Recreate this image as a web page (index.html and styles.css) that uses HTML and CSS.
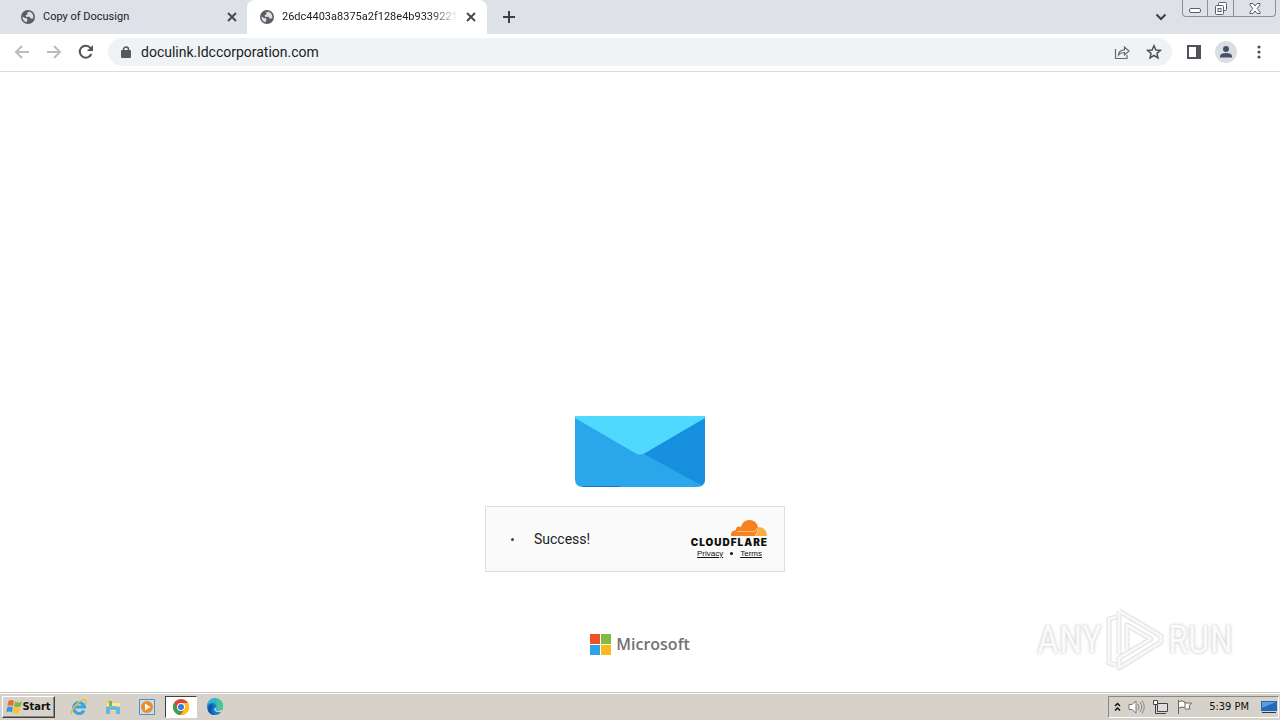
FILE: index.html
```html
<!DOCTYPE html>
<html lang="en">
<head>
<meta charset="utf-8">
<meta name="viewport" content="width=device-width, initial-scale=1">
<title>doculink.ldccorporation.com</title>
<link rel="stylesheet" href="styles.css">
</head>
<body>
<svg class="defs" width="0" height="0" aria-hidden="true">
  <symbol id="globe" viewBox="0 0 14 14"><circle cx="7" cy="7" r="7" fill="#5a5d61"/><path d="M1.500 6.500 4 8 6 8.200 6.500 10 5.500 12.300Q1.500 11 1.500 6.500Z M8.500 1.500 6 2.800 6.500 4.300 4.500 5.500 5.500 7 8.500 6.800 9.500 8.500 12.300 8.500Q13 3.500 8.500 1.500Z" fill="#dcdfe4"/></symbol>
  <symbol id="cross" viewBox="0 0 10 10"><path d="M1 1 9 9M9 1 1 9" stroke="#45484c" stroke-width="1.900" fill="none"/></symbol>
</svg>
<header>
  <div class="tabstrip">
    <div class="tab">
      <svg class="favicon"><use href="#globe"/></svg>
      <span class="tab-title">Copy of Docusign</span>
      <button class="close" aria-label="Close tab"><svg width="10" height="10"><use href="#cross"/></svg></button>
    </div>
    <div class="tab active">
      <svg class="favicon"><use href="#globe"/></svg>
      <span class="tab-title fade">26dc4403a8375a2f128e4b9339221c</span>
      <button class="close" aria-label="Close tab"><svg width="10" height="10"><use href="#cross"/></svg></button>
    </div>
    <button class="new-tab" aria-label="New tab"><svg width="12" height="12" viewBox="0 0 12 12"><path d="M6 0V12M0 6H12" stroke="#3c4043" stroke-width="2"/></svg></button>
    <button class="tab-search" aria-label="Search tabs"><svg width="12" height="8" viewBox="0 0 12 8"><path d="M1.500 1.500 6 6 10.500 1.500" fill="none" stroke="#3c4043" stroke-width="2"/></svg></button>
    <div class="window-buttons">
      <button aria-label="Minimize"><svg width="14" height="12" viewBox="0 0 14 12"><rect x="1.500" y="6.500" width="11" height="4" rx="1.500" fill="#fff" stroke="#5b5e66"/></svg></button>
      <button aria-label="Restore"><svg width="14" height="13" viewBox="0 0 14 13"><g fill="#fff" stroke="#5b5e66"><rect x="4.500" y=".5" width="8" height="8" rx="1"/><rect x="1.500" y="3.500" width="8" height="9" rx="1"/><rect x="4" y="6.500" width="3" height="3"/></g></svg></button>
      <button aria-label="Close"><svg width="12" height="11" viewBox="0 0 12 11"><path d="M1 .5H4L6 3 8 .5H11V2L8.200 5.500 11 9V10.500H8L6 8 4 10.500H1V9L3.800 5.500 1 2Z" fill="#fff" stroke="#5b5e66"/></svg></button>
    </div>
  </div>
  <div class="toolbar">
    <div class="nav">
      <button aria-label="Back"><svg width="16" height="14" viewBox="0 0 16 14"><path d="M15 7H2M8 1 2 7 8 13" fill="none" stroke="#babcbe" stroke-width="2"/></svg></button>
      <button aria-label="Forward"><svg width="16" height="14" viewBox="0 0 16 14"><path d="M1 7H14M8 1 14 7 8 13" fill="none" stroke="#babcbe" stroke-width="2"/></svg></button>
      <button aria-label="Reload"><svg width="16" height="16" viewBox="0 0 16 16"><path d="M13.300 10A6 6 0 1 1 12.500 4L14 6" fill="none" stroke="#505357" stroke-width="2"/><path d="M15 1V7H9Z" fill="#505357"/></svg></button>
    </div>
    <div class="omnibox">
      <svg width="10" height="13" viewBox="0 0 10 13"><rect y="4" width="10" height="8" rx="1" fill="#55585c"/><path d="M2.500 5V3.500a2.500 2.500 0 0 1 5 0V5" fill="none" stroke="#55585c" stroke-width="1.500"/></svg>
      <input class="url" aria-label="Address" value="doculink.ldccorporation.com">
      <button aria-label="Share"><svg width="16" height="16" viewBox="0 0 16 16"><path d="M1.500 5V14.500H13V11M4.500 11Q5 6 10.500 5.800V3L15 7 10.500 11V8.500Q6.500 8.500 4.500 11Z" fill="none" stroke="#66696d" stroke-width="1.200"/></svg></button>
      <button aria-label="Bookmark"><svg width="16" height="16" viewBox="0 0 16 16"><path d="M8 1.700 9.900 6 14.500 6.400 11 9.400 12 14 8 11.500 4 14 5 9.400 1.500 6.400 6.100 6Z" fill="none" stroke="#505357" stroke-width="1.500"/></svg></button>
    </div>
    <div class="actions">
      <button aria-label="Side panel"><svg width="14" height="14" viewBox="0 0 14 14"><path d="M1 1H13V13H1Z" fill="#fff" stroke="#505357" stroke-width="2"/><path d="M9 1H14V13H9Z" fill="#505357"/></svg></button>
      <button aria-label="Profile"><svg width="22" height="22" viewBox="0 0 22 22"><circle cx="11" cy="11" r="11" fill="#dadde2"/><circle cx="11" cy="8" r="3" fill="#45516c"/><path d="M5 16.500V15Q5.500 12 11 12T17 15V16.500Z" fill="#45516c"/></svg></button>
      <button aria-label="Menu"><svg width="4" height="14" viewBox="0 0 4 14" fill="#505357"><circle cx="2" cy="2" r="1.600"/><circle cx="2" cy="7" r="1.600"/><circle cx="2" cy="12" r="1.600"/></svg></button>
    </div>
  </div>
</header>
<main>
  <svg class="envelope" width="130" height="71" viewBox="0 0 130 71">
    <path d="M0 0H130V63Q130 71 122 71H8Q0 71 0 63Z" fill="#2aa6eb"/>
    <path d="M130 1V63Q130 68 126 69L69 38Z" fill="#168fdf"/>
    <path d="M0 0H130V2L70 37Q65 40 60 37L0 2Z" fill="#50d9ff"/>
    <path d="M8 70.500H45" stroke="#1479bd"/>
  </svg>
  <section class="challenge">
    <span class="dot"></span>
    <span class="success">Success!</span>
    <div class="brand">
      <svg width="38" height="18" viewBox="0 0 38 18"><path d="M1 17Q0 12 6 11Q6 6 11 8Q13 1 19 1Q27 1 28 9L26 17Z" fill="#f6821f"/><path d="M26 17 28.500 8Q36 8 37 17Z" fill="#fbad41"/><path d="M7 12.500H24Q26 12.500 27 9M25 17 26.500 14 29 11" stroke="#fcd5a8" stroke-width=".7" fill="none"/></svg>
      <span class="brand-name">CLOUDFLARE</span>
      <div class="links"><a href="#">Privacy</a><i></i><a href="#">Terms</a></div>
    </div>
  </section>
  <div class="microsoft">
    <svg width="21" height="21" viewBox="0 0 21 21"><path d="M0 0H10V10H0Z" fill="#ef5325"/><path d="M11 0H21V10H11Z" fill="#80bb42"/><path d="M0 11H10V21H0Z" fill="#2ea3e5"/><path d="M11 11H21V21H11Z" fill="#fcb91c"/></svg>
    <span>Microsoft</span>
  </div>
  <div class="watermark">
    <span>ANY</span>
    <svg width="60" height="64" viewBox="0 0 60 64"><g fill="none" stroke-linejoin="round"><path d="M11 9 4 11V55L11 57M14 3V46M14 3 56 28V34L14 60V50L46 31 22 17V42" stroke="#e2e2e2" stroke-width="5"/><path d="M11 9 4 11V55L11 57M14 3V46M14 3 56 28V34L14 60V50L46 31 22 17V42" stroke="#f8f8f8" stroke-width="3"/></g></svg>
    <span>RUN</span>
  </div>
</main>
<footer class="taskbar">
  <button class="start"><svg width="16" height="16" viewBox="0 0 16 16"><path d="M2.500 2Q5 0 8 2L7 7.200Q4 5.500 1.500 7.200Z" fill="#ed6a2c"/><path d="M9 2.500Q12 4.500 16 2.500L14.500 7.500Q11 9 8 7.500Z" fill="#7fba3c"/><path d="M1.300 8.300Q4 6.500 6.800 8.300L6 13.500Q3 11.500 .3 13.500Z" fill="#3c94d5"/><path d="M7.800 8.500Q11 10 14.300 8.500L13 14Q10 15.500 7 14Z" fill="#f7c32e"/></svg>Start</button>
  <nav class="apps">
    <button aria-label="Internet Explorer"><svg width="18" height="18" viewBox="0 0 18 18"><path d="M14 12.500A5.500 5.500 0 1 1 14.500 9H5" fill="none" stroke="#37a5e1" stroke-width="3"/><path d="M2 16C-2 14 12-1 16 2Q17 3 15.500 6" fill="none" stroke="#e8bd35" stroke-width="1.500"/></svg></button>
    <button aria-label="Explorer"><svg width="18" height="18" viewBox="0 0 18 18"><path d="M2 2H7L8 4H15V14H2Z" fill="#e9cd72"/><path d="M3 5H16V13H3Z" fill="#f8e7a4"/><path d="M2 9Q9 7 16 9V16H12V12H6V16H2Z" fill="#65b9dc"/><path d="M5 3H8V8H5Z" fill="#72b866"/></svg></button>
    <button aria-label="Media Player"><svg width="18" height="18" viewBox="0 0 18 18"><path d="M1.500 1.500H16.500V16.500H1.500Z" fill="#c9e0f3" stroke="#4d91c9"/><circle cx="9" cy="9" r="6" fill="#f28b21"/><path d="M7 5.500 12.500 9 7 12.500Z" fill="#fff"/></svg></button>
    <button class="running" aria-label="Chrome"><svg width="16" height="16" viewBox="0 0 16 16"><circle cx="8" cy="8" r="8" fill="#e44336"/><path d="M1.070 4 4.500 10 8 12 7.500 16A8 8 0 0 1 1.070 4Z" fill="#35a352"/><path d="M8 4H14.930A8 8 0 0 1 7.500 16L11.500 10Z" fill="#fbc116"/><circle cx="8" cy="8" r="4" fill="#fff"/><circle cx="8" cy="8" r="3" fill="#3478e5"/></svg></button>
    <button aria-label="Edge"><svg width="18" height="18" viewBox="0 0 18 18"><circle cx="9" cy="9" r="8" fill="#1778c9"/><path d="M1 8A8 8 0 0 1 17 8Q17 12 12 12 9 12 10.500 9 10 5 6 5 3 5 1 8Z" fill="#2bb5cf"/><path d="M10 1Q17 2 17 8T12 12Q9 11 11 9 12 5 10 1Z" fill="#4ac596"/><path d="M10.500 9Q8.500 11 11 12.500 14 13 16.500 11.500L15.500 14Q12 15 9 13 7 10 10.500 9Z" fill="#d6d3ce"/><path d="M7 8Q4 14 9 17 4 17 2 13 1 7 6 6Z" fill="#1259a5"/></svg></button>
  </nav>
  <div class="tray">
    <button aria-label="Show hidden icons"><svg width="7" height="10" viewBox="0 0 7 10"><path d="M1 4 3.500 1.500 6 4M1 8.500 3.500 6 6 8.500" fill="none" stroke="#111" stroke-width="1.500"/></svg></button>
    <button aria-label="Volume"><svg width="17" height="16" viewBox="0 0 17 16"><path d="M1 5.500H4L8 2V14L4 10.500H1Z" fill="#fff" stroke="#777"/><path d="M10 5Q12 8 10 11M12 3Q15.500 8 12 13M14 1.500Q18.500 8 14 14.500" fill="none" stroke="#888"/></svg></button>
    <button aria-label="Network"><svg width="17" height="16" viewBox="0 0 17 16"><path d="M5.500 4.500H15.500V12.500H5.500Z" fill="#ddd" stroke="#444"/><path d="M1.500 1.500H5.500V5.500H1.500Z" fill="#fff" stroke="#444"/><path d="M7 14.500H14M3.500 5V14.500H9" fill="none" stroke="#444"/></svg></button>
    <button aria-label="Action Center"><svg width="17" height="16" viewBox="0 0 17 16"><path d="M2.500 1V15M3 2.500Q6 1 9 3V9Q6 7 3 9M9 4H15.500L13 7 14 10H9" fill="#fff" stroke="#666"/></svg></button>
    <time>5:39 PM</time>
    <button aria-label="Show desktop"><svg width="16" height="14" viewBox="0 0 16 14"><path d="M0 1H16V11H0Z" fill="#2468bd"/><path d="M1 2H15L1 8Z" fill="#5c9cdf"/><path d="M1 12.500H15" stroke="#25364c"/></svg></button>
  </div>
</footer>
</body>
</html>
```
FILE: styles.css
```css
* { box-sizing: border-box; }
body {
  margin: 0;
  min-height: 100vh;
  display: flex;
  flex-direction: column;
  background: #fff;
  color: #202124;
  font: 11px/16px "DejaVu Sans Condensed", "DejaVu Sans", sans-serif;
}
svg { display: block; flex: none; }
.defs { position: absolute; }
button {
  display: flex;
  align-items: center;
  justify-content: center;
  margin: 0;
  padding: 0;
  border: 0;
  background: none;
  color: inherit;
  font: inherit;
}

.tabstrip { display: flex; height: 34px; background: #dee1e8; }
.tab { display: flex; align-items: center; width: 247px; padding: 0 10px 0 21px; }
.tab.active { width: 240px; padding: 0 11px 0 13px; background: #fff; border-radius: 8px 8px 0 0; }
.favicon { width: 14px; height: 14px; margin-right: 8px; }
.tab-title { flex: 1; overflow: hidden; white-space: nowrap; font: 11px/16px Roboto, sans-serif; }
.fade { -webkit-mask-image: linear-gradient(90deg, #000 84%, transparent); mask-image: linear-gradient(90deg, #000 84%, transparent); }
.close { width: 10px; height: 10px; margin-left: 8px; }
.new-tab { width: 44px; }
.tab-search { width: 24px; margin-left: auto; }
.window-buttons {
  display: flex;
  height: 17px;
  margin: 0 4px 0 9px;
  border: 1px solid #8d909a;
  border-top: 0;
  border-radius: 0 0 4px 4px;
}
.window-buttons button { width: 24px; }
.window-buttons button + button { width: 26px; border-left: 1px solid #8d909a; }
.window-buttons button:last-child { width: 42px; }

.toolbar { display: flex; align-items: center; height: 38px; padding: 0 14px 1px; border-bottom: 1px solid #d9dbdd; }
.nav { display: flex; gap: 16px; margin-right: 14px; }
.nav button { width: 16px; height: 16px; }
.omnibox { display: flex; flex: 1; align-items: center; gap: 16px; height: 28px; padding: 0 10px 0 13px; border-radius: 14px; background: #f0f3f5; }
.url { flex: 1; min-width: 0; margin-left: -6px; padding: 0; border: 0; background: none; color: #202124; font: 14px/20px Roboto, sans-serif; }
.actions { display: flex; align-items: center; gap: 14px; margin-left: 15px; }
.actions button:last-child { width: 15px; }

main {
  position: relative;
  flex: 1;
  display: flex;
  flex-direction: column;
  align-items: center;
  justify-content: flex-end;
  padding: 24px 0 37px;
}
.challenge {
  display: flex;
  align-items: center;
  width: 300px;
  height: 66px;
  margin: 19px 10px 62px 0;
  padding: 0 16px 0 25px;
  border: 1px solid #dedede;
  background: #fafafa;
}
.dot { width: 3px; height: 3px; border-radius: 50%; background: #444; }
.success { flex: 1; margin-left: 20px; font: 14px/20px Roboto, sans-serif; }
.brand { display: flex; flex-direction: column; align-items: flex-end; color: #111; }
.brand-name { font: 900 10px/11px Inter, "DejaVu Sans", sans-serif; letter-spacing: 1px; }
.links { display: flex; align-items: center; gap: 7px; padding-right: 6px; font: 8px/12px "Liberation Sans", sans-serif; }
.links a { color: inherit; text-decoration: underline; }
.links i { width: 3px; height: 3px; border-radius: 50%; background: #111; }
.microsoft { display: flex; align-items: center; gap: 5px; height: 21px; color: #737373; font: 600 16px/21px "Open Sans", sans-serif; }
.watermark {
  position: absolute;
  right: 47px;
  bottom: 20px;
  display: flex;
  align-items: center;
  gap: 3px;
  color: #fafafa;
  font: 38px/64px "Roboto Condensed", "Liberation Sans Narrow", sans-serif;
  text-shadow: 0 0 2px #c8c8c8, 0 0 4px #ddd;
}

.taskbar { display: flex; align-items: center; height: 28px; padding: 2px 1px 1px 2px; border-top: 1px solid #c9c6c0; box-shadow: inset 0 1px #fff; background: #d6d2ca; color: #111; }
.start {
  gap: 0;
  width: 53px;
  height: 22px;
  border: 1px solid;
  border-color: #fff #404040 #404040 #fff;
  box-shadow: inset -1px -1px #888;
  font-weight: bold;
}
.apps { display: flex; gap: 2px; margin-left: 8px; }
.apps button { width: 32px; height: 22px; }
.apps .running { border: 1px solid; border-color: #404040 #fff #fff #404040; background: #fff; }
.tray {
  display: flex;
  align-items: center;
  gap: 7px;
  height: 22px;
  margin-left: auto;
  padding: 0 1px 0 5px;
  border: 1px solid;
  border-color: #888 #fff #fff #888;
}
.tray time { margin: 0 5px 0 9px; font-size: 11px; }
```
